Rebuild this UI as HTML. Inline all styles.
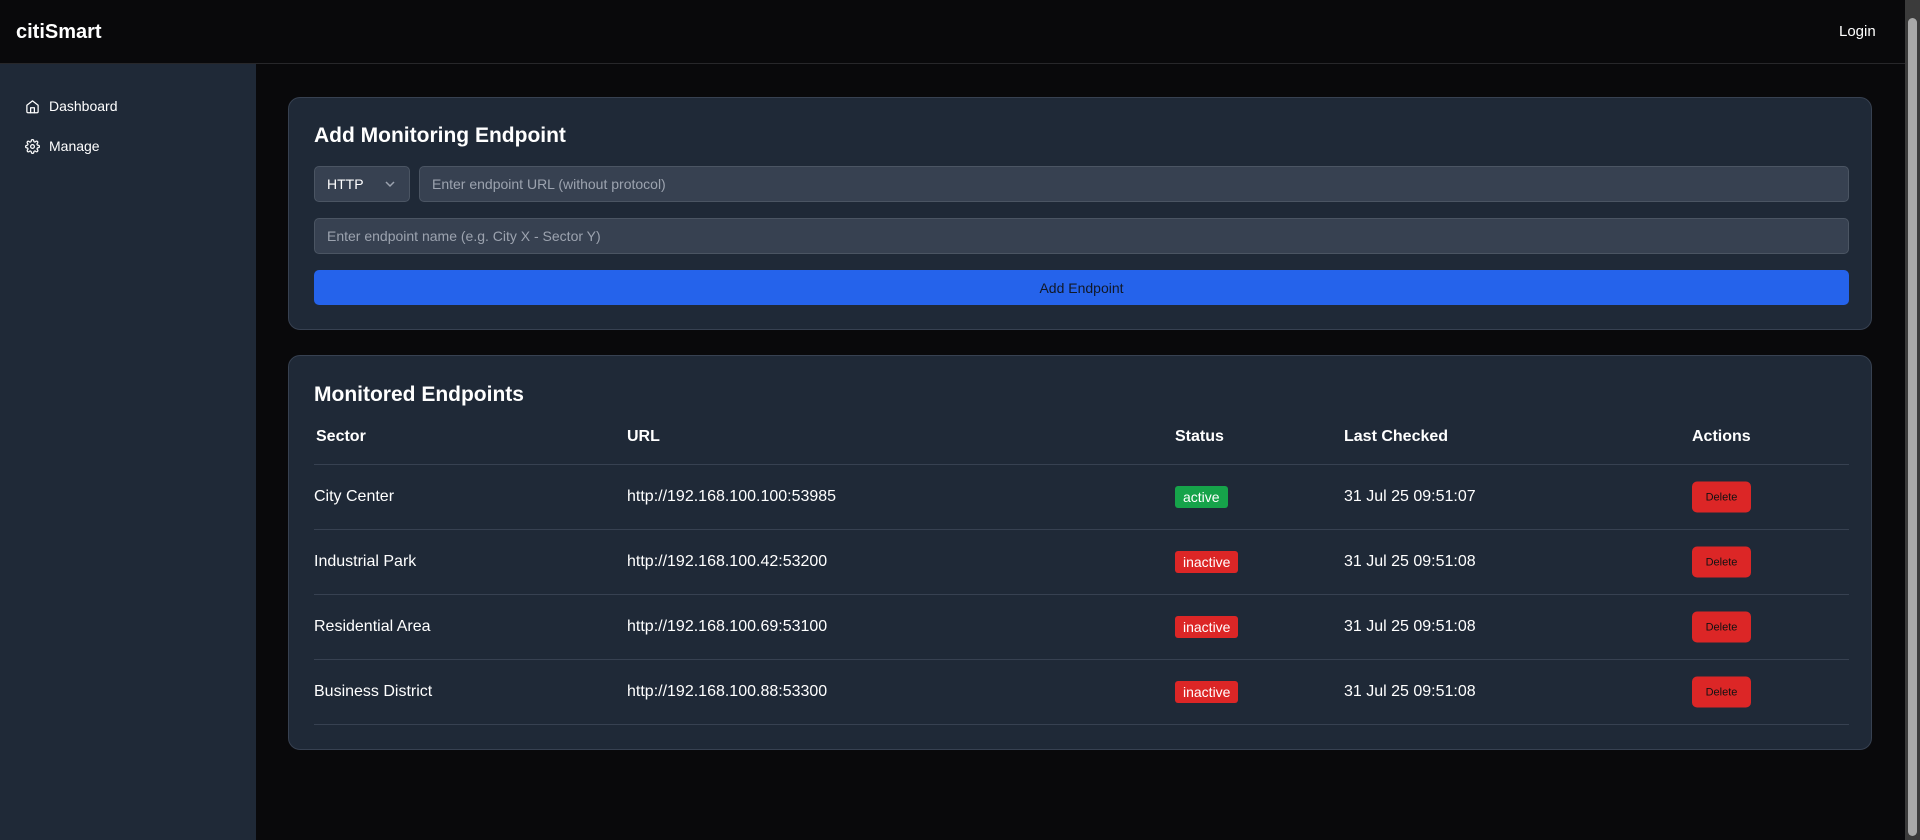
<!DOCTYPE html>
<html><head><meta charset="utf-8"><style>
*{box-sizing:border-box;margin:0;padding:0}
body{width:1920px;height:840px;overflow:hidden;background:#09090b;font-family:"Liberation Sans",sans-serif;color:#fff;position:relative}
.hdr{position:absolute;left:0;top:0;width:1905px;height:64px;border-bottom:1px solid #27272a;background:#09090b}
.logo{position:absolute;left:16px;top:21px;font-size:20px;font-weight:bold}
.login{position:absolute;left:1839px;top:23px;font-size:15px}
.side{position:absolute;left:0;top:64px;width:256px;height:776px;background:#1f2937}
.nav{position:absolute;left:25px;font-size:14px;display:flex;align-items:center;gap:9px}
.main{position:absolute;left:256px;top:64px;width:1649px;height:776px;background:#09090b}
.card{position:absolute;left:288px;width:1584px;background:#1f2937;border:1px solid #374151;border-radius:12px}
h2{position:absolute;left:25px;font-size:21px;font-weight:bold}
.sel,.inp{position:absolute;background:#374151;border:1px solid #4b5563;border-radius:5px;font-size:14px;display:flex;align-items:center;padding-left:12px;color:#9ca3af}
.btn{position:absolute;left:25px;top:172px;width:1535px;height:35px;background:#2563eb;border-radius:5px;color:#111827;font-size:14px;display:flex;align-items:center;justify-content:center}
.th{position:absolute;top:72px;font-size:16px;font-weight:bold}
.line{position:absolute;left:25px;width:1535px;height:1px;background:#374151}
.cell{position:absolute;font-size:16px;transform:translateY(-50%)}
.badge{position:absolute;transform:translateY(-50%);font-size:14px;height:22px;line-height:22px;padding:0 8px;border-radius:3px;color:#fff}
.del{position:absolute;transform:translateY(-50%);width:59px;height:31px;background:#dc2626;border-radius:5px;color:#111;font-size:11px;display:flex;align-items:center;justify-content:center}
.sb{position:absolute;left:1905px;top:0;width:15px;height:840px;background:#3b3b3b}
.thumb{position:absolute;left:1908px;top:18px;width:9px;height:818px;background:#a8a8a8;border-radius:5px}
</style></head><body>
<div class="hdr"><div class="logo">citiSmart</div><div class="login">Login</div></div>
<div class="side">
<div class="nav" style="top:34px"><svg width="15" height="15" viewBox="0 0 24 24" fill="none" stroke="#fff" stroke-width="2" stroke-linecap="round" stroke-linejoin="round"><path d="M3 10l9-7 9 7v10a2 2 0 0 1-2 2H5a2 2 0 0 1-2-2z"/><path d="M9 22v-8h6v8"/></svg>Dashboard</div>
<div class="nav" style="top:74px"><svg width="15" height="15" viewBox="0 0 24 24" fill="none" stroke="#fff" stroke-width="2" stroke-linecap="round" stroke-linejoin="round"><circle cx="12" cy="12" r="3"/><path d="M19.4 15a1.7 1.7 0 0 0 .3 1.8l.1.1a2 2 0 1 1-2.8 2.8l-.1-.1a1.7 1.7 0 0 0-1.8-.3 1.7 1.7 0 0 0-1 1.5V21a2 2 0 1 1-4 0v-.1a1.7 1.7 0 0 0-1.1-1.5 1.7 1.7 0 0 0-1.8.3l-.1.1a2 2 0 1 1-2.8-2.8l.1-.1a1.7 1.7 0 0 0 .3-1.8 1.7 1.7 0 0 0-1.500-1H3a2 2 0 1 1 0-4h.1a1.7 1.7 0 0 0 1.5-1.1 1.7 1.7 0 0 0-.3-1.8l-.1-.1a2 2 0 1 1 2.8-2.8l.1.1a1.7 1.7 0 0 0 1.8.3H9a1.7 1.7 0 0 0 1-1.5V3a2 2 0 1 1 4 0v.1a1.7 1.7 0 0 0 1 1.5 1.7 1.7 0 0 0 1.8-.3l.1-.1a2 2 0 1 1 2.8 2.8l-.1.1a1.7 1.7 0 0 0-.3 1.8V9a1.7 1.7 0 0 0 1.5 1H21a2 2 0 1 1 0 4h-.1a1.7 1.7 0 0 0-1.5 1z"/></svg>Manage</div>
</div>
<div class="main"></div>
<div class="card" style="top:97px;height:233px">
<h2 style="top:26px">Add Monitoring Endpoint</h2>
<div class="sel" style="left:25px;top:68px;width:96px;height:36px;color:#fff">HTTP<svg style="position:absolute;left:70px;top:14px" width="10" height="7" viewBox="0 0 10 7" fill="none" stroke="#9ca3af" stroke-width="1.5"><path d="M1 1l4 4 4-4"/></svg></div>
<div class="inp" style="left:130px;top:68px;width:1430px;height:36px">Enter endpoint URL (without protocol)</div>
<div class="inp" style="left:25px;top:120px;width:1535px;height:36px">Enter endpoint name (e.g. City X - Sector Y)</div>
<div class="btn">Add Endpoint</div>
</div>
<div class="card" style="top:355px;height:395px">
<h2 style="top:27px">Monitored Endpoints</h2>
<div class="th" style="left:27px">Sector</div>
<div class="th" style="left:338px">URL</div>
<div class="th" style="left:886px">Status</div>
<div class="th" style="left:1055px">Last Checked</div>
<div class="th" style="left:1403px">Actions</div>
<div class="line" style="top:108px"></div>
<div class="cell" style="left:25px;top:141px">City Center</div><div class="cell" style="left:338px;top:141px">http://192.168.100.100:53985</div><div class="badge" style="left:886px;top:141px;background:#16a34a">active</div><div class="cell" style="left:1055px;top:141px">31 Jul 25 09:51:07</div><div class="del" style="left:1403px;top:141px">Delete</div>
<div class="line" style="top:173px"></div>
<div class="cell" style="left:25px;top:206px">Industrial Park</div><div class="cell" style="left:338px;top:206px">http://192.168.100.42:53200</div><div class="badge" style="left:886px;top:206px;background:#dc2626">inactive</div><div class="cell" style="left:1055px;top:206px">31 Jul 25 09:51:08</div><div class="del" style="left:1403px;top:206px">Delete</div>
<div class="line" style="top:238px"></div>
<div class="cell" style="left:25px;top:271px">Residential Area</div><div class="cell" style="left:338px;top:271px">http://192.168.100.69:53100</div><div class="badge" style="left:886px;top:271px;background:#dc2626">inactive</div><div class="cell" style="left:1055px;top:271px">31 Jul 25 09:51:08</div><div class="del" style="left:1403px;top:271px">Delete</div>
<div class="line" style="top:303px"></div>
<div class="cell" style="left:25px;top:336px">Business District</div><div class="cell" style="left:338px;top:336px">http://192.168.100.88:53300</div><div class="badge" style="left:886px;top:336px;background:#dc2626">inactive</div><div class="cell" style="left:1055px;top:336px">31 Jul 25 09:51:08</div><div class="del" style="left:1403px;top:336px">Delete</div>
<div class="line" style="top:368px"></div>
</div>
<div class="sb"></div><div class="thumb"></div>
</body></html>
